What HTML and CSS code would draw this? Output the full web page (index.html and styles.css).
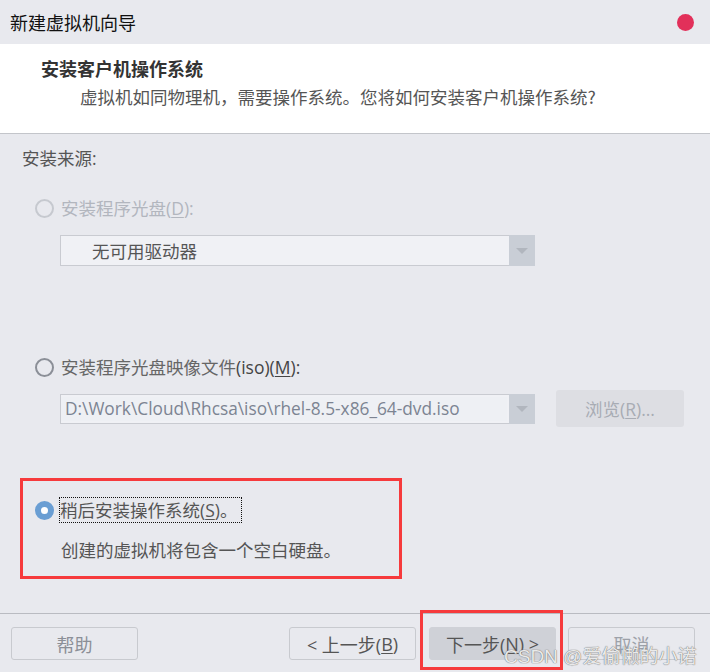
FILE: index.html
```html
<!DOCTYPE html>
<html lang="zh-CN">
<head>
<meta charset="utf-8">
<title>新建虚拟机向导</title>
<link rel="stylesheet" href="styles.css">
</head>
<body>
<div class="window">
  <div class="titlebar">
    <span class="title">新建虚拟机向导</span>
    <span class="close-dot"></span>
  </div>
  <div class="header">
    <div class="h-title">安装客户机操作系统</div>
    <div class="h-sub">虚拟机如同物理机，需要操作系统。您将如何安装客户机操作系统?</div>
  </div>
  <div class="content">
    <div class="source-label">安装来源:</div>

    <div class="radio-row disabled row-disc">
      <span class="radio"></span>
      <span class="label">安装程序光盘(<u>D</u>):</span>
    </div>
    <div class="combo combo-disc">
      <span class="combo-text cjk">无可用驱动器</span>
      <span class="combo-btn"><span class="arrow"></span></span>
    </div>

    <div class="radio-row row-iso">
      <span class="radio"></span>
      <span class="label">安装程序光盘映像文件<span class="dark">(iso)(<u>M</u>):</span></span>
    </div>
    <div class="iso-row">
      <div class="combo combo-iso">
        <span class="combo-text path">D:\Work\Cloud\Rhcsa\iso\rhel-8.5-x86_64-dvd.iso</span>
        <span class="combo-btn"><span class="arrow"></span></span>
      </div>
      <div class="browse">浏览(<u>R</u>)...</div>
    </div>

    <div class="later-box">
      <div class="radio-row row-later">
        <span class="radio checked"></span>
        <span class="label focus">稍后安装操作系统(<u>S</u>)。</span>
      </div>
      <div class="later-desc">创建的虚拟机将包含一个空白硬盘。</div>
    </div>
  </div>
  <div class="footer">
    <div class="btn btn-help">帮助</div>
    <div class="btn btn-prev">&lt; 上一步(<u>B</u>)</div>
    <div class="btn btn-next">下一步(<u>N</u>) &gt;<span class="mark"></span></div>
    <div class="btn btn-cancel">取消</div>
    <span class="watermark">CSDN @爱偷懒的小诺</span>
  </div>
</div>
</body>
</html>
```

FILE: styles.css
```css
* { box-sizing: border-box; }
html, body {
  margin: 0;
  padding: 0;
  background: #e8e9ee;
}
body {
  font-family: "Open Sans", "Noto Sans CJK SC", sans-serif;
  color: #555;
}
u { text-decoration: underline; text-underline-offset: 2px; }
.window {
  width: 710px;
  height: 672px;
  display: flex;
  flex-direction: column;
  position: relative;
  overflow: hidden;
}
.titlebar {
  height: 44px;
  display: flex;
  align-items: center;
  justify-content: space-between;
  padding: 0 16px 0 10px;
  background: #e8e9ee;
}
.title {
  font-size: 18px;
  color: #111;
  font-family: "Noto Sans CJK SC", sans-serif;
}
.close-dot {
  width: 17px;
  height: 17px;
  border-radius: 50%;
  background: #e2305a;
}
.header {
  height: 90px;
  background: #fff;
  border-bottom: 1px solid #c3c5ca;
  padding-top: 12px;
}
.h-title {
  padding-left: 41px;
  font-size: 18px;
  line-height: 24px;
  font-weight: bold;
  color: #333;
  font-family: "Noto Sans CJK SC", sans-serif;
}
.h-sub {
  margin-top: 5px;
  padding-left: 80px;
  font-size: 17.5px;
  line-height: 24px;
  color: #555;
  font-family: "Noto Sans CJK SC", sans-serif;
}
.content {
  flex: 1;
  padding: 12px 0 0 0;
  font-size: 17.5px;
}
.source-label {
  padding-left: 22px;
  line-height: 24px;
  color: #555;
}
.radio-row {
  display: flex;
  align-items: center;
  height: 24px;
  padding-left: 35px;
}
.radio {
  width: 19px;
  height: 19px;
  border-radius: 50%;
  border: 2px solid #8b8f97;
  flex: none;
  margin-right: 7px;
  background: transparent;
}
.radio.checked {
  border: 6px solid #6a9ed3;
  background: #fff;
}
.disabled .radio { border-color: #c6c9cf; }
.disabled .label { color: #b2b6be; }
.label { color: #666; line-height: 24px; white-space: nowrap; }
.dark { color: #444; }
.row-disc { margin-top: 26px; }
.combo {
  display: flex;
  height: 31px;
  margin-left: 60px;
  width: 475px;
  border: 1px solid #c9cbd1;
  border-right: none;
  background: #f0f1f5;
}
.combo-disc { margin-top: 15px; }
.combo-text {
  flex: 1;
  display: flex;
  align-items: center;
  white-space: nowrap;
  overflow: hidden;
}
.combo-text.cjk { padding-left: 31px; color: #555; }
.combo-text.path {
  padding-left: 4px;
  color: #7c8492;
  font-size: 17.3px;
  margin: 2px 2px 2px 0;
  background: #eef0f4;
}
.combo-btn {
  width: 26px;
  background: #c9ced6;
  display: flex;
  align-items: center;
  justify-content: center;
  margin: -1px 0;
}
.arrow {
  width: 0;
  height: 0;
  border-left: 6px solid transparent;
  border-right: 6px solid transparent;
  border-top: 6px solid #b1b6be;
}
.row-iso { margin-top: 89px; }
.iso-row {
  display: flex;
  align-items: center;
  margin-top: 11px;
  height: 37px;
}
.combo-iso { height: 30px; }
.browse {
  margin-left: 21px;
  width: 128px;
  height: 37px;
  border-radius: 3px;
  background: #dddee3;
  color: #a8acb4;
  display: flex;
  align-items: center;
  justify-content: center;
}
.later-box {
  margin: 51px 0 0 20px;
  width: 382px;
  height: 101px;
  border: 3px solid #f63a3c;
  padding: 17px 0 0 12px;
}
.row-later { padding-left: 0; }
.row-later .label {
  color: #555;
  outline: 1px dotted #111;
  outline-offset: 0;
  padding-right: 4px;
  margin-left: -1px;
}
.later-desc {
  margin-top: 16px;
  padding-left: 26px;
  line-height: 24px;
  color: #555;
}
.footer {
  height: 59px;
  border-top: 1px solid #b9bbc1;
  display: flex;
  align-items: flex-start;
  padding: 13px 0 0 11px;
  position: relative;
  font-size: 18px;
}
.btn {
  width: 127px;
  height: 33px;
  border: 1px solid #c8cacf;
  border-radius: 3px;
  display: flex;
  align-items: center;
  justify-content: center;
  color: #555;
  position: relative;
}
.btn-help { color: #8b8f97; }
.btn-prev { margin-left: 151px; }
.btn-next {
  margin-left: 13px;
  background: #cfd1d7;
  border-color: #cfd1d7;
}
.btn-cancel { margin-left: 12px; color: #9da1a9; }
.mark {
  position: absolute;
  left: -10px;
  top: -18px;
  width: 143px;
  height: 60px;
  border: 3px solid #f63a3c;
}
.watermark {
  position: absolute;
  left: 504px;
  top: 27px;
  font-size: 19px;
  color: rgba(255, 255, 255, 0.85);
  text-shadow: 0 0 1px #777, 0 0 1px #777;
  font-family: "Liberation Sans", "Noto Sans CJK SC", sans-serif;
  white-space: nowrap;
}
```
